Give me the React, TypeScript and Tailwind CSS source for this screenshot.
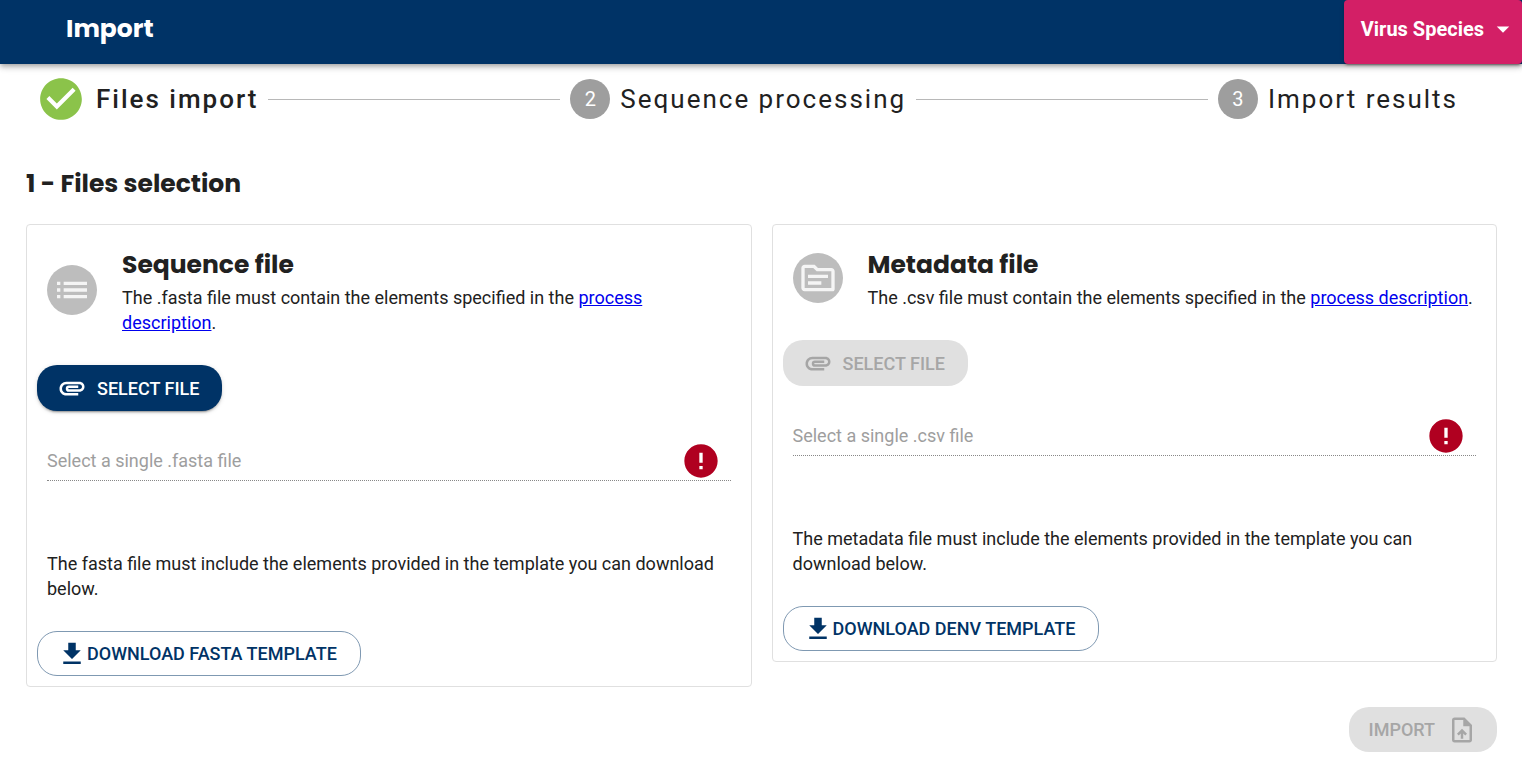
/**
 * App.tsx — Import page, step 1: sequence + metadata file selection.
 */
import React, { useRef } from 'react'
import {
  MdArrowDropDown,
  MdAttachment,
  MdCheckCircle,
  MdError,
  MdFileDownload,
  MdList,
  MdOutlineTopic,
  MdOutlineUploadFile,
} from 'react-icons/md'

type FileKind = 'fasta' | 'csv'

interface FileCardProps {
  kind: FileKind
  title: string
  icon: React.ReactNode
  hint: string
  templateLabel: string
  disabled?: boolean
}

function Header(): React.JSX.Element {
  return (
    <header className="relative flex h-16 items-stretch justify-between bg-[#003366] text-white shadow-[0_2px_4px_-1px_rgba(0,0,0,0.2),0_4px_5px_0_rgba(0,0,0,0.14),0_1px_10px_0_rgba(0,0,0,0.12)]">
      <h1 className="pt-[11px] pl-[66px] font-[Poppins,Inter,sans-serif] text-[25px] leading-9 font-bold">
        Import
      </h1>
      <button
        type="button"
        aria-haspopup="menu"
        className="flex items-center gap-1 rounded-sm bg-[#d31f66] pr-1 pb-1.5 pl-[17px] text-xl font-bold shadow-[0_3px_1px_-2px_rgba(0,0,0,0.2),0_2px_2px_0_rgba(0,0,0,0.14),0_1px_5px_0_rgba(0,0,0,0.12)]"
      >
        Virus Species
        <MdArrowDropDown size={30} aria-hidden="true" />
      </button>
    </header>
  )
}

function StepNumber({ value }: { value: number }): React.JSX.Element {
  return (
    <span className="flex size-10 shrink-0 items-center justify-center rounded-full bg-[#9e9e9e] text-xl tracking-normal text-white">
      {value}
    </span>
  )
}

function StepLine(): React.JSX.Element {
  return <li aria-hidden="true" className="mx-2.5 h-px flex-1 bg-[#b8b8b8]" />
}

function Stepper(): React.JSX.Element {
  return (
    <ol className="flex h-[70px] items-center pr-16 pl-9 text-[26px] tracking-[2px] whitespace-nowrap">
      <li className="flex items-center gap-2.5 font-medium" aria-current="step">
        <MdCheckCircle size={50} className="shrink-0 text-[#8bc34a]" aria-hidden="true" />
        Files import
      </li>
      <StepLine />
      <li className="flex items-center gap-2.5">
        <StepNumber value={2} />
        Sequence processing
      </li>
      <StepLine />
      <li className="flex items-center gap-2.5">
        <StepNumber value={3} />
        Import results
      </li>
    </ol>
  )
}

function FileCard({ kind, title, icon, hint, templateLabel, disabled = false }: FileCardProps): React.JSX.Element {
  const fileRef = useRef<HTMLInputElement>(null)

  return (
    <section className="rounded border border-[#e0e0e0] px-2.5 pt-5 pb-2.5">
      <div className="flex items-center gap-[25px] px-2.5">
        <div className="flex size-[50px] shrink-0 items-center justify-center rounded-full bg-[#bdbdbd] text-[#f5f5f5]">
          {icon}
        </div>
        <div>
          <h3 className="font-[Poppins,Inter,sans-serif] text-[25px] leading-10 font-bold">{title}</h3>
          <p>
            The .{kind} file must contain the elements specified in the{' '}
            <a href="#process" className="text-[#0000ee] underline">
              process description
            </a>
            .
          </p>
        </div>
      </div>

      <button
        type="button"
        disabled={disabled}
        onClick={() => fileRef.current?.click()}
        className="mt-[30px] flex h-[46px] items-center gap-2.5 rounded-[20px] bg-[#003366] pr-[23px] pl-5 font-medium text-white shadow-[0_3px_1px_-2px_rgba(0,0,0,0.2),0_2px_2px_0_rgba(0,0,0,0.14),0_1px_5px_0_rgba(0,0,0,0.12)] disabled:bg-[#e0e0e0] disabled:text-[#a6a6a6] disabled:shadow-none"
      >
        <MdAttachment size={30} aria-hidden="true" />
        SELECT FILE
      </button>
      <input ref={fileRef} type="file" accept={`.${kind}`} aria-label={title} className="hidden" />

      <div className="mx-2.5 mt-[30px] flex h-10 items-center border-b border-dotted border-[#888888] pr-2.5">
        <input
          type="text"
          readOnly
          aria-label={`${title} name`}
          placeholder={`Select a single .${kind} file`}
          className="min-w-0 flex-1 outline-none placeholder:text-[#9e9e9e]"
        />
        <MdError size={40} className="shrink-0 text-[#b00020]" aria-hidden="true" />
      </div>

      <p className="mx-2.5 mt-[70px]">{hint}</p>

      <button
        type="button"
        className="mt-[30px] flex h-[45px] items-center rounded-[20px] border border-[#7f99b2] pr-[23px] pl-[19px] font-medium text-[#003366]"
      >
        <MdFileDownload size={30} aria-hidden="true" />
        {templateLabel}
      </button>
    </section>
  )
}

export default function App(): React.JSX.Element {
  return (
    <div className="min-h-screen bg-white font-[Roboto,sans-serif] text-lg leading-[25px] text-[#212121]">
      <Header />
      <Stepper />
      <main className="pr-[25px] pb-[22px] pl-[26px]">
        <h2 className="pt-8 font-[Poppins,Inter,sans-serif] text-[25px] leading-9 font-bold">
          1 - Files selection
        </h2>

        <div className="mt-[22px] grid grid-cols-2 items-start gap-5">
          <FileCard
            kind="fasta"
            title="Sequence file"
            icon={<MdList size={40} aria-hidden="true" />}
            hint="The fasta file must include the elements provided in the template you can download below."
            templateLabel="DOWNLOAD FASTA TEMPLATE"
          />
          <FileCard
            kind="csv"
            title="Metadata file"
            icon={<MdOutlineTopic size={40} aria-hidden="true" />}
            hint="The metadata file must include the elements provided in the template you can download below."
            templateLabel="DOWNLOAD DENV TEMPLATE"
            disabled
          />
        </div>

        <div className="mt-5 flex justify-end">
          <button
            type="button"
            disabled
            className="flex h-[45px] items-center gap-3 rounded-[20px] bg-[#e0e0e0] px-5 font-medium text-[#a6a6a6]"
          >
            IMPORT
            <MdOutlineUploadFile size={30} aria-hidden="true" />
          </button>
        </div>
      </main>
    </div>
  )
}
